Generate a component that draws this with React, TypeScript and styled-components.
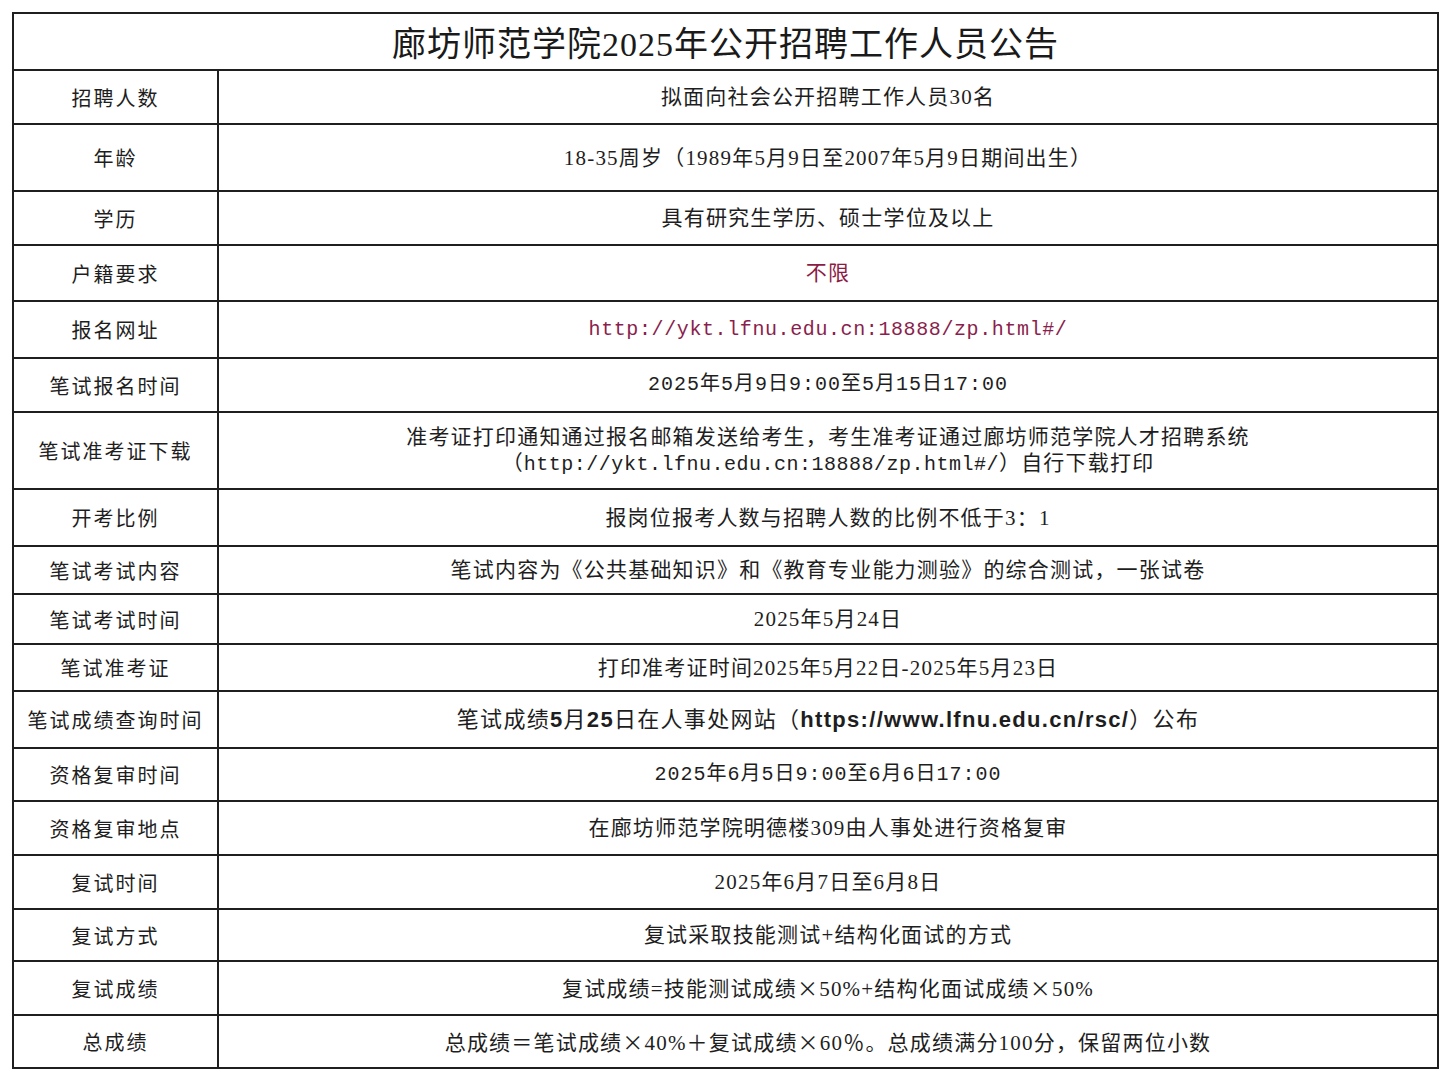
import React from "react";
import styled, { createGlobalStyle } from "styled-components";

const GlobalStyle = createGlobalStyle`
  html, body {
    margin: 0;
    padding: 0;
    background: #ffffff;
  }
  body {
    font-family: "Liberation Serif", "Noto Sans CJK SC", serif;
    color: #1e1e1e;
  }
`;

const Page = styled.div`
  padding: 12px;
  width: 1427px;
`;

const Table = styled.table`
  width: 1427px;
  border-collapse: collapse;
  table-layout: fixed;
  border: 2px solid #1f1f1f;
`;

const TitleCell = styled.th`
  height: 55px;
  border: 2px solid #1f1f1f;
  font-size: 34px;
  font-weight: 400;
  letter-spacing: 1px;
  text-align: center;
  vertical-align: middle;
  padding: 0;
  color: #1a1a1a;
`;

const LabelCell = styled.td`
  width: 203px;
  border: 2px solid #1f1f1f;
  font-size: 20px;
  letter-spacing: 2px;
  text-align: center;
  vertical-align: middle;
  padding: 0;
  color: #1e1e1e;
`;

type Tone = "plain" | "link" | "red";
type Face = "serif" | "mono" | "date" | "sans";

const toneColor: Record<Tone, string> = {
  plain: "#1e1e1e",
  link: "#8a1f4e",
  red: "#8c1c45",
};

const faceFont: Record<Face, string> = {
  serif: `font-family: "Liberation Serif", "Noto Sans CJK SC", serif; font-size: 21px; letter-spacing: 1.2px;`,
  mono: `font-family: "Liberation Mono", "Noto Sans CJK SC", monospace; font-size: 20px; letter-spacing: 0.6px;`,
  date: `font-family: "Liberation Mono", "Noto Sans CJK SC", monospace; font-size: 20px; letter-spacing: 1px;`,
  sans: `font-family: "Liberation Serif", "Noto Sans CJK SC", serif; font-size: 22px; letter-spacing: 1.3px;`,
};

const ValueCell = styled.td<{ $tone: Tone; $face: Face }>`
  border: 2px solid #1f1f1f;
  line-height: 26px;
  text-align: center;
  vertical-align: middle;
  padding: 0 10px;
  color: ${(p) => toneColor[p.$tone]};
  ${(p) => faceFont[p.$face]}
`;

const Mono = styled.span`
  font-family: "Liberation Mono", "Noto Sans CJK SC", monospace;
  font-size: 20px;
  letter-spacing: 0.5px;
`;

const BoldLatin = styled.b`
  font-family: "Liberation Sans", sans-serif;
  font-weight: 700;
`;

const Times = styled.span`
  font-family: "Noto Sans CJK SC", sans-serif;
`;

interface Row {
  label: string;
  height: number;
  value: React.ReactNode;
  tone?: Tone;
  face?: Face;
}

const rows: Row[] = [
  { label: "招聘人数", height: 54, value: "拟面向社会公开招聘工作人员30名" },
  { label: "年龄", height: 67, value: "18-35周岁（1989年5月9日至2007年5月9日期间出生）" },
  { label: "学历", height: 54, value: "具有研究生学历、硕士学位及以上" },
  { label: "户籍要求", height: 56, value: "不限", tone: "red" },
  {
    label: "报名网址",
    height: 57,
    value: "http://ykt.lfnu.edu.cn:18888/zp.html#/",
    tone: "link",
    face: "mono",
  },
  { label: "笔试报名时间", height: 54, value: "2025年5月9日9:00至5月15日17:00", face: "date" },
  {
    label: "笔试准考证下载",
    height: 77,
    value: (
      <>
        准考证打印通知通过报名邮箱发送给考生，考生准考证通过廊坊师范学院人才招聘系统
        <br />
        （<Mono>http://ykt.lfnu.edu.cn:18888/zp.html#/</Mono>）自行下载打印
      </>
    ),
  },
  { label: "开考比例", height: 57, value: "报岗位报考人数与招聘人数的比例不低于3：1" },
  {
    label: "笔试考试内容",
    height: 48,
    value: "笔试内容为《公共基础知识》和《教育专业能力测验》的综合测试，一张试卷",
  },
  { label: "笔试考试时间", height: 50, value: "2025年5月24日" },
  { label: "笔试准考证", height: 47, value: "打印准考证时间2025年5月22日-2025年5月23日" },
  {
    label: "笔试成绩查询时间",
    height: 57,
    face: "sans",
    value: (
      <>
        笔试成绩<BoldLatin>5</BoldLatin>月<BoldLatin>25</BoldLatin>日在人事处网站（
        <BoldLatin>https://www.lfnu.edu.cn/rsc/</BoldLatin>）公布
      </>
    ),
  },
  { label: "资格复审时间", height: 53, value: "2025年6月5日9:00至6月6日17:00", face: "date" },
  { label: "资格复审地点", height: 54, value: "在廊坊师范学院明德楼309由人事处进行资格复审" },
  { label: "复试时间", height: 54, value: "2025年6月7日至6月8日" },
  { label: "复试方式", height: 52, value: "复试采取技能测试+结构化面试的方式" },
  {
    label: "复试成绩",
    height: 54,
    value: (
      <>
        复试成绩=技能测试成绩<Times>×</Times>50%+结构化面试成绩<Times>×</Times>50%
      </>
    ),
  },
  {
    label: "总成绩",
    height: 53,
    value: (
      <>
        总成绩＝笔试成绩<Times>×</Times>40%＋复试成绩<Times>×</Times>60％。总成绩满分100分，保留两位小数
      </>
    ),
  },
];

const App: React.FC = () => {
  return (
    <Page>
      <GlobalStyle />
      <Table>
        <colgroup>
          <col style={{ width: 205 }} />
          <col />
        </colgroup>
        <thead>
          <tr>
            <TitleCell colSpan={2}>廊坊师范学院2025年公开招聘工作人员公告</TitleCell>
          </tr>
        </thead>
        <tbody>
          {rows.map((row) => (
            <tr key={row.label} style={{ height: row.height }}>
              <LabelCell>{row.label}</LabelCell>
              <ValueCell $tone={row.tone ?? "plain"} $face={row.face ?? "serif"}>
                {row.value}
              </ValueCell>
            </tr>
          ))}
        </tbody>
      </Table>
    </Page>
  );
};

export default App;
